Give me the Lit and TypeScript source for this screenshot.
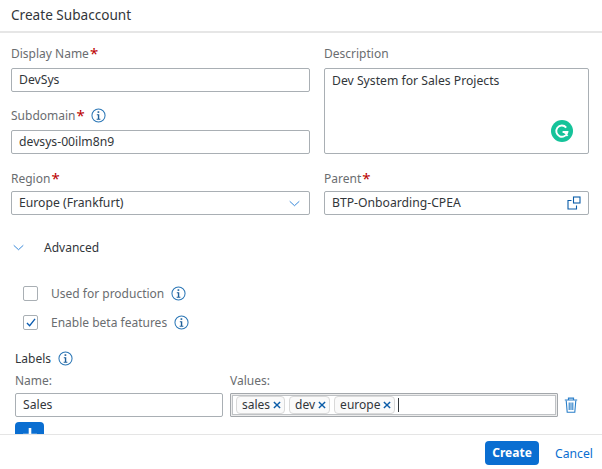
import { LitElement, html, css, svg } from 'lit';
import { customElement } from 'lit/decorators.js';

const infoIcon = html`<svg class="info" viewBox="0 0 16 16" width="15" height="15" aria-hidden="true">
  <circle cx="8" cy="8" r="7" fill="none" stroke="#2a76b6" stroke-width="1.1"></circle>
  <rect x="7" y="3.5" width="1.8" height="1.7" fill="#1f5f99"></rect>
  <path d="M6.2 6.7H8.8V11.4H10V12.5H6V11.4H7.3V7.8H6.2Z" fill="#1f5f99"></path>
</svg>`;

const chevron = svg`<path d="M1 1.5L7.5 7.5L14 1.5" fill="none" stroke="#0a6ed1" stroke-width="1.1"></path>`;

@customElement('app-root')
export class AppRoot extends LitElement {
  static styles = css`
    :host {
      display: flex;
      flex-direction: column;
      width: 602px;
      height: 469px;
      background: #fff;
      color: #32363a;
      font-family: 'Noto Sans', 'Open Sans', sans-serif;
      font-size: 12px;
      overflow: hidden;
    }
    .header {
      flex: none;
      height: 33px;
      box-sizing: border-box;
      padding: 4px 11px 0;
      font-size: 13.6px;
      line-height: 21px;
      border-bottom: 2px solid #e6e6e6;
    }
    .body {
      flex: 1;
      min-height: 0;
      overflow: hidden;
    }
    .form {
      display: grid;
      grid-template-columns: 299px 265px;
      column-gap: 14px;
      padding: 12px 0 0 11px;
    }
    .col {
      display: flex;
      flex-direction: column;
    }
    .label {
      display: flex;
      align-items: center;
      height: 17px;
      margin-bottom: 6px;
      color: #6a6d70;
      line-height: 17px;
    }
    .label.gap {
      margin-top: 15px;
    }
    .label.low {
      margin-top: 16px;
      margin-bottom: 4px;
    }
    .label .info {
      margin-left: 6px;
    }
    .req {
      color: #b00;
      font-size: 15px;
      margin-left: 1px;
      line-height: 17px;
    }
    .field {
      box-sizing: border-box;
      height: 24px;
      display: flex;
      align-items: center;
      justify-content: space-between;
      padding: 0 7px;
      border: 1px solid #a9afb4;
      border-radius: 2px;
      line-height: 22px;
      background: #fff;
      font-size: 12.2px;
    }
    .area {
      position: relative;
      box-sizing: border-box;
      height: 86px;
      padding: 1px 7px;
      border: 1px solid #a9afb4;
      border-radius: 2px;
      line-height: 22px;
      font-size: 12.2px;
    }
    .grammarly {
      position: absolute;
      right: 15px;
      bottom: 11px;
    }
    .advanced {
      display: flex;
      align-items: center;
      gap: 20px;
      padding: 22px 0 0 13px;
      height: 20px;
    }
    .checks {
      display: flex;
      flex-direction: column;
      gap: 14px;
      padding: 29px 0 0 23px;
    }
    .check {
      display: flex;
      align-items: center;
      height: 15px;
      color: #6a6d70;
    }
    .box {
      box-sizing: border-box;
      width: 15px;
      height: 15px;
      margin-right: 13px;
      border: 1px solid #a9afb4;
      border-radius: 2px;
      display: flex;
      align-items: center;
      justify-content: center;
    }
    .check .info {
      margin-left: 7px;
    }
    .labels {
      padding: 20px 0 0 15px;
    }
    .labels-title {
      display: flex;
      align-items: center;
      gap: 7px;
      height: 17px;
      margin-bottom: 5px;
    }
    .row {
      display: grid;
      grid-template-columns: 208px 328px 20px;
      column-gap: 7px;
    }
    .row .label {
      margin-bottom: 4px;
    }
    .values {
      box-sizing: border-box;
      height: 24px;
      display: flex;
      align-items: center;
      gap: 4px;
      padding: 0 5px;
      border: 1px solid #a3a7ab;
      box-shadow: inset 0 0 0 1px #ececec, inset 0 0 0 2px #bfc2c5;
      border-radius: 1px;
    }
    .chip {
      box-sizing: border-box;
      height: 18px;
      display: flex;
      align-items: center;
      gap: 3px;
      padding: 0 3px 0 5px;
      border: 1px solid #d9d9d9;
      border-radius: 4px;
      background: #fafafa;
      line-height: 16px;
    }
    .caret {
      width: 1px;
      height: 14px;
      background: #32363a;
      margin-left: -1px;
    }
    .trash {
      height: 24px;
      display: flex;
      align-items: center;
      margin-left: -1px;
    }
    .add {
      box-sizing: border-box;
      width: 29px;
      height: 24px;
      margin-top: 5px;
      border-radius: 4px;
      background: #0a6ed1;
      display: flex;
      justify-content: center;
      padding-top: 6px;
    }
    .footer {
      flex: none;
      height: 35px;
      box-sizing: border-box;
      border-top: 1px solid #e5e5e5;
      display: flex;
      align-items: center;
      justify-content: flex-end;
      gap: 16px;
      padding: 2px 9px 0 0;
    }
    .create {
      width: 54px;
      height: 24px;
      border-radius: 4px;
      background: #0a6ed1;
      color: #fff;
      font-weight: 700;
      text-align: center;
      line-height: 24px;
    }
    .cancel {
      color: #0a6ed1;
      font-size: 12.2px;
    }
  `;

  private renderChip(text: string) {
    return html`<span class="chip">${text}
      <svg viewBox="0 0 9 9" width="8" height="8" aria-hidden="true">
        <path d="M1 1L8 8M8 1L1 8" stroke="#0a5ca8" stroke-width="1.6"></path>
      </svg>
    </span>`;
  }

  render() {
    return html`
      <div class="header">Create Subaccount</div>
      <div class="body">
        <div class="form">
          <div class="col">
            <div class="label">Display Name<span class="req">*</span></div>
            <div class="field">DevSys</div>
            <div class="label gap">Subdomain<span class="req">*</span>${infoIcon}</div>
            <div class="field">devsys-00ilm8n9</div>
          </div>
          <div class="col">
            <div class="label">Description</div>
            <div class="area">
              Dev System for Sales Projects
              <svg class="grammarly" viewBox="0 0 22 22" width="22" height="22" aria-hidden="true">
                <circle cx="11" cy="11" r="11" fill="#15c39a"></circle>
                <path d="M15.2 7.6A5.6 5.6 0 1 0 16.4 12H11.6M13.4 12L16.6 15.8" fill="none" stroke="#fff" stroke-width="1.9"></path>
              </svg>
            </div>
          </div>
          <div class="col">
            <div class="label low">Region<span class="req">*</span></div>
            <div class="field">
              Europe (Frankfurt)
              <svg viewBox="0 0 15 9" width="11" height="7" aria-hidden="true" style="margin-right:2px">${chevron}</svg>
            </div>
          </div>
          <div class="col">
            <div class="label low">Parent<span class="req">*</span></div>
            <div class="field">
              BTP-Onboarding-CPEA
              <svg viewBox="0 0 14 14" width="14" height="14" aria-hidden="true">
                <path d="M4.5 4.5H1V13H9.5V9.5" fill="none" stroke="#0a5ca8" stroke-width="1.1"></path>
                <rect x="6.5" y="1" width="6.5" height="6" fill="none" stroke="#0a5ca8" stroke-width="1.1"></rect>
              </svg>
            </div>
          </div>
        </div>

        <div class="advanced">
          <svg viewBox="0 0 15 9" width="11" height="7" aria-hidden="true">${chevron}</svg>
          <span>Advanced</span>
        </div>

        <div class="checks">
          <div class="check"><span class="box"></span>Used for production${infoIcon}</div>
          <div class="check">
            <span class="box">
              <svg viewBox="0 0 11 10" width="10" height="9" aria-hidden="true">
                <path d="M1 5.5L4 8.5L10 1" fill="none" stroke="#0a5bb0" stroke-width="1.5"></path>
              </svg>
            </span>Enable beta features${infoIcon}
          </div>
        </div>

        <div class="labels">
          <div class="labels-title">Labels ${infoIcon}</div>
          <div class="row">
            <div class="col">
              <div class="label">Name:</div>
              <div class="field">Sales</div>
            </div>
            <div class="col">
              <div class="label">Values:</div>
              <div class="values">
                ${this.renderChip('sales')}${this.renderChip('dev')}${this.renderChip('europe')}
                <span class="caret"></span>
              </div>
            </div>
            <div class="col">
              <div class="label"></div>
              <div class="trash">
                <svg viewBox="0 0 14 16" width="14" height="16" aria-hidden="true">
                  <path d="M0.8 3H13.2M4.5 3V1.2H9.5V3" fill="none" stroke="#2a7fc9" stroke-width="1.2"></path>
                  <path d="M2.2 3.5L3.2 15.2H10.8L11.8 3.5M5.2 5.5V13M7 5.5V13M8.8 5.5V13" fill="none" stroke="#2a7fc9" stroke-width="1.1"></path>
                </svg>
              </div>
            </div>
          </div>
          <div class="add">
            <svg viewBox="0 0 14 14" width="14" height="14" aria-hidden="true">
              <path d="M7 0V14M0 7H14" stroke="#fff" stroke-width="2.6"></path>
            </svg>
          </div>
        </div>
      </div>
      <div class="footer">
        <span class="create">Create</span>
        <span class="cancel">Cancel</span>
      </div>
    `;
  }
}
